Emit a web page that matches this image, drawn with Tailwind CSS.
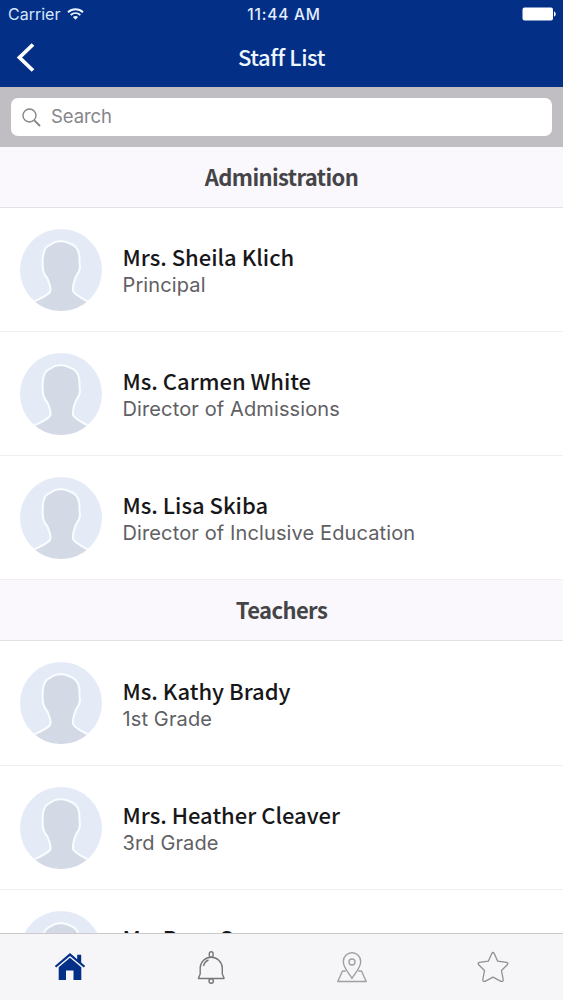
<!DOCTYPE html>
<html lang="en">
<head>
  <meta charset="UTF-8">
  <meta name="viewport" content="width=device-width, initial-scale=1.0">
  <script src="https://cdn.jsdelivr.net/npm/@tailwindcss/browser@4"></script>
  <title>Staff List</title>
</head>
<body class="bg-white">
  <!-- shared avatar silhouette -->
  <svg class="hidden">
    <symbol id="avatar" viewBox="0 0 82 82">
      <rect width="82" height="82" fill="#e4ebf7"/>
      <path d="M13 73C19 70 26 67.500 30 63C32 59 29 54 27.500 49.500C24 46 22.500 42 22.700 36C22.500 30 22 24 26 18.500C29 15.500 32 15 35 13C39 11.500 46 12 49.500 14.500C55 16 58 20 59 25C60 29 59 33 60 37C60 41 58.500 44 56.500 46.500C54.500 51 52.500 55 53 62C56 67 63 70 69 73L62 90H20Z" fill="#d3d9e5" stroke="#fafdff" stroke-width="2"/>
    </symbol>
  </svg>

  <div class="flex flex-col h-[1000px] w-[563px] overflow-hidden font-[Inter,sans-serif]">
    <header class="shrink-0 h-[87px] bg-[#032f86] text-white">
      <div class="grid grid-cols-3 items-center h-7 pl-2 pr-[7px] text-[16px]">
        <div class="flex items-center gap-[7px] text-[#d5e7ff]">
          <span>Carrier</span>
          <svg class="w-[17px] h-3" viewBox="0 0 17 12" fill="none" stroke="#e8f4ff" stroke-width="1.900">
            <path d="M1 4.300C5.200 .300 11.800 .300 16 4.300M3.700 7C6.500 4.500 10.500 4.500 13.300 7"/>
            <path d="M5.900 9C7.400 7.700 9.600 7.700 11.100 9L8.500 11.700Z" fill="#e8f4ff" stroke="none"/>
          </svg>
        </div>
        <div class="pl-1 pt-px text-center font-medium text-[15.500px] tracking-[0.8px] text-[#e4efff] whitespace-nowrap">11:44 AM</div>
        <svg class="justify-self-end w-[34px] h-[14px]" viewBox="0 0 34 14" fill="#fff">
          <rect x=".5" y=".5" width="30.500" height="13" rx="2"/>
          <path d="M32 4.500C34.300 5 34.300 9 32 9.500Z"/>
        </svg>
      </div>
      <div class="grid grid-cols-3 items-center h-[58px] pl-4 pr-4">
        <svg class="w-5 h-[30px]" viewBox="0 0 20 30" fill="none" stroke="#fff" stroke-width="3.800"><path d="M17 2.500L3.500 15.500L17 28.500"/></svg>
        <h1 class="pb-[2px] text-center font-medium text-[22px] text-[#eef6ff] tracking-[-0.4px] font-['Noto_Sans_CJK_SC',sans-serif]">Staff List</h1>
      </div>
    </header>

    <div class="shrink-0 h-[60px] bg-[#c0bec2] px-[11px] pt-[11px]">
      <div class="flex items-center gap-[10px] h-[38px] pl-[11px] rounded-[7px] bg-white text-[#85858a] text-[18.500px]">
        <svg class="w-[19px] h-[19px]" viewBox="0 0 19 19" fill="none" stroke="#85858a" stroke-width="1.400"><circle cx="7.500" cy="7.500" r="6.500"/><path d="M12.300 12.300L18 18" stroke-width="1.900"/></svg>
        <span class="tracking-[-0.1px]">Search</span>
      </div>
    </div>

    <main class="grow overflow-hidden">
      <h2 class="flex items-center justify-center h-[61px] pb-[2px] bg-[#faf8fc] border-b border-[#e3e1e6] text-[#454548] text-[22px] tracking-[-0.6px] font-bold font-['Noto_Sans_CJK_SC',sans-serif]">Administration</h2>
      <ul>
        <li class="flex items-center gap-[20.5px] h-[124px] px-5 border-b border-[#efeff2]">
          <svg class="w-[82px] h-[82px] rounded-full"><use href="#avatar"/></svg>
          <div class="flex flex-col gap-[2px] pt-[2px]">
            <div class="text-[22px] leading-7 font-medium text-[#17171a] font-['Noto_Sans_CJK_SC',sans-serif]">Mrs. Sheila Klich</div>
            <div class="text-[20px] leading-[27px] tracking-[0.12px] text-[#606064]">Principal</div>
          </div>
        </li>
        <li class="flex items-center gap-[20.5px] h-[124px] px-5 border-b border-[#efeff2]">
          <svg class="w-[82px] h-[82px] rounded-full"><use href="#avatar"/></svg>
          <div class="flex flex-col gap-[2px] pt-[2px]">
            <div class="text-[22px] leading-7 font-medium text-[#17171a] font-['Noto_Sans_CJK_SC',sans-serif]">Ms. Carmen White</div>
            <div class="text-[20px] leading-[27px] tracking-[0.12px] text-[#606064]">Director of Admissions</div>
          </div>
        </li>
        <li class="flex items-center gap-[20.5px] h-[124px] px-5 border-b border-[#efeff2]">
          <svg class="w-[82px] h-[82px] rounded-full"><use href="#avatar"/></svg>
          <div class="flex flex-col gap-[2px] pt-[2px]">
            <div class="text-[22px] leading-7 font-medium text-[#17171a] font-['Noto_Sans_CJK_SC',sans-serif]">Ms. Lisa Skiba</div>
            <div class="text-[20px] leading-[27px] tracking-[0.12px] text-[#606064]">Director of Inclusive Education</div>
          </div>
        </li>
      </ul>
      <h2 class="flex items-center justify-center h-[61px] pb-[2px] bg-[#faf8fc] border-b border-[#e3e1e6] text-[#454548] text-[22px] tracking-[-0.6px] font-bold font-['Noto_Sans_CJK_SC',sans-serif]">Teachers</h2>
      <ul>
        <li class="flex items-center gap-[20.5px] h-[125px] px-5 border-b border-[#efeff2]">
          <svg class="w-[82px] h-[82px] rounded-full"><use href="#avatar"/></svg>
          <div class="flex flex-col gap-[2px] pt-[2px]">
            <div class="text-[22px] leading-7 font-medium text-[#17171a] font-['Noto_Sans_CJK_SC',sans-serif]">Ms. Kathy Brady</div>
            <div class="text-[20px] leading-[27px] tracking-[0.12px] text-[#606064]">1st Grade</div>
          </div>
        </li>
        <li class="flex items-center gap-[20.5px] h-[124px] px-5 border-b border-[#efeff2]">
          <svg class="w-[82px] h-[82px] rounded-full"><use href="#avatar"/></svg>
          <div class="flex flex-col gap-[2px] pt-[2px]">
            <div class="text-[22px] leading-7 font-medium text-[#17171a] font-['Noto_Sans_CJK_SC',sans-serif]">Mrs. Heather Cleaver</div>
            <div class="text-[20px] leading-[27px] tracking-[0.12px] text-[#606064]">3rd Grade</div>
          </div>
        </li>
        <li class="flex items-center gap-[20.5px] h-[124px] px-5">
          <svg class="w-[82px] h-[82px] rounded-full"><use href="#avatar"/></svg>
          <div class="pb-[31px]">
            <div class="text-[22px] leading-7 font-medium text-[#17171a] font-['Noto_Sans_CJK_SC',sans-serif]">Ms. Rose C</div>
          </div>
        </li>
      </ul>
    </main>

    <nav class="shrink-0 grid grid-cols-4 justify-items-center pt-[17px] h-[67px] bg-[#f6f5f8] border-t border-[#cbcacd]">
      <svg class="w-8 h-8" viewBox="0 0 32 32" fill="#032f86">
        <path d="M16 2L.800 15L2.200 16.500L16 4.900L29.800 16.500L31.200 15L27.200 11.500V3.700H23.200V8.200Z"/>
        <path d="M16 6.800L4.700 16.300V29H12V19.500H19.500V29H27.300V16.300Z"/>
      </svg>
      <svg class="w-8 h-[34px]" viewBox="0 0 32 34" fill="none" stroke="#77777b" stroke-width="1.400" stroke-linejoin="round">
        <rect x="14.300" y=".8" width="3.800" height="5.400" rx="1.900"/>
        <path d="M5.200 22.500C5 25 3.300 25.800 3.500 27.500H29C29.200 25.800 27.500 25 27.300 22.500V17C27 10.500 22 6.300 16.200 6.300C10.400 6.300 5.400 10.500 5.200 17ZM8.500 15C9.200 12 11 10 13.500 9"/>
        <circle cx="16.200" cy="30" r="2.200"/>
      </svg>
      <svg class="w-8 h-8" viewBox="0 0 32 32" fill="none" stroke="#a09fa4" stroke-width="1.400" stroke-linejoin="round">
        <path d="M16 27.500C13 22 7.300 17 7.300 10.500C7.300 5.500 11.200 1.800 16 1.800C20.800 1.800 24.700 5.500 24.700 10.500C24.700 17 19 22 16 27.500Z"/>
        <circle cx="16" cy="11" r="3"/>
        <path d="M9.700 20H6.500L1.800 30.500H30.200L25.500 20H22.300"/>
      </svg>
      <svg class="w-8 h-8" viewBox="0 0 32 32" fill="none" stroke="#8f8f93" stroke-width="1.300" stroke-linejoin="round">
        <path d="M14.800 2.500Q16 .500 17.200 2.500L20.700 10.200L29.500 11.400Q31.800 12 30.300 13.800L24.500 19.500L26.200 28.500Q26.300 31 24 30.300L16 26.200L8 30.300Q5.700 31 5.800 28.500L7.500 19.500L1.700 13.800Q.200 12 2.500 11.400L11.300 10.200Z"/>
      </svg>
    </nav>
  </div>
</body>
</html>
